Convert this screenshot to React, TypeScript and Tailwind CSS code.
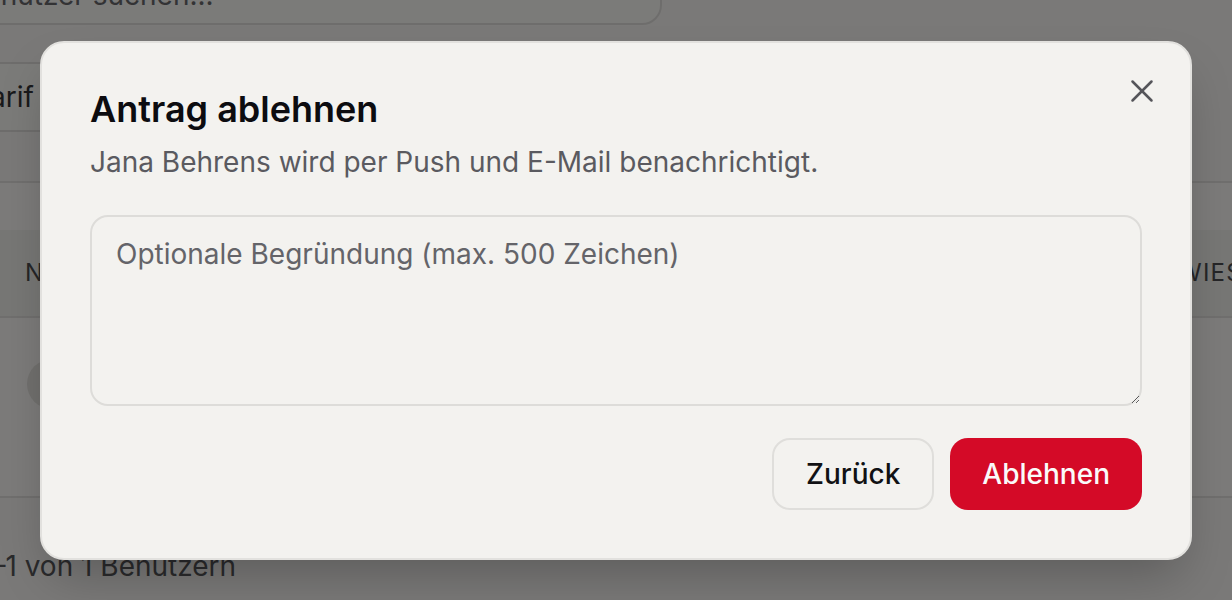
import React from 'react';
import { X, ChevronDown } from 'lucide-react';

const App: React.FC = () => {
  return (
    <div className="relative h-screen w-full overflow-hidden bg-[#f4f3f0] font-['Inter',sans-serif]">
      {/* Seite im Hintergrund (abgedunkelt) */}
      <div className="-ml-[60px] -mt-[35px] flex flex-col">
        <div className="flex h-[60px] w-[722px] items-center rounded-[20px] border-2 border-[#dcdbd8] bg-[#f7f6f3] pl-6">
          <span className="text-[28px] text-[#66666a]">Benutzer suchen...</span>
        </div>

        <div className="mt-[37px] flex h-[70px] w-[300px] items-center justify-between rounded-[18px] border-2 border-[#dcdbd8] bg-[#f7f6f3] pl-8 pr-6">
          <span className="text-[28px] text-[#333336]">Tarif</span>
          <ChevronDown size={28} className="text-[#555]" />
        </div>

        <div className="mt-[49px] w-[1400px] rounded-[24px] border-2 border-[#e0dfdc] bg-[#f8f7f4]">
          <div className="h-[47px]" />
          <div className="flex h-[88px] items-center border-b-2 border-[#e0dfdc] bg-[#efeeea] text-[24px] uppercase tracking-wider text-[#4a4a4e]">
            <span className="w-[1166px] pl-[83px]">Name</span>
            <span>Zugewiesen</span>
          </div>
          <div className="flex h-[178px] items-start pl-[85px] pt-[41px]">
            <div className="h-[50px] w-[50px] rounded-full bg-[#e2e0dc]" />
          </div>
        </div>

        <div className="mt-[47px] pl-[40px] text-[28px] text-[#555558]">1–1 von 1 Benutzern</div>
      </div>

      {/* Overlay + Dialog */}
      <div className="absolute inset-0 flex items-center justify-center bg-black/50">
        <div role="dialog" className="relative w-[1152px] rounded-[24px] border-2 border-[#e2e1de] bg-[#f3f2ef] p-12 shadow-2xl">
          <button className="absolute right-[29px] top-[29px] text-[#55555a]" aria-label="Schließen">
            <X size={38} strokeWidth={1.6} />
          </button>

          <h2 className="text-[36px] font-semibold leading-none text-[#0c0c10]">Antrag ablehnen</h2>
          <p className="mt-[14px] text-[28px] leading-[42px] text-[#5a5a60]">
            Jana Behrens wird per Push und E-Mail benachrichtigt.
          </p>

          <textarea
            className="mt-8 block h-[191px] w-full rounded-[18px] border-2 border-[#dddcd9] bg-transparent px-6 py-4 text-[28px] leading-[42px] text-[#111] outline-none placeholder:text-[#646469]"
            placeholder="Optionale Begründung (max. 500 Zeichen)"
          />

          <div className="mt-8 flex justify-end gap-4">
            <button className="h-[72px] rounded-[18px] border-2 border-[#dfdedb] px-8 text-[28px] font-medium text-[#111114]">
              Zurück
            </button>
            <button className="h-[72px] rounded-[18px] bg-[#d40a27] px-8 text-[28px] font-medium text-[#fafafa]">
              Ablehnen
            </button>
          </div>
        </div>
      </div>
    </div>
  );
};

export default App;
